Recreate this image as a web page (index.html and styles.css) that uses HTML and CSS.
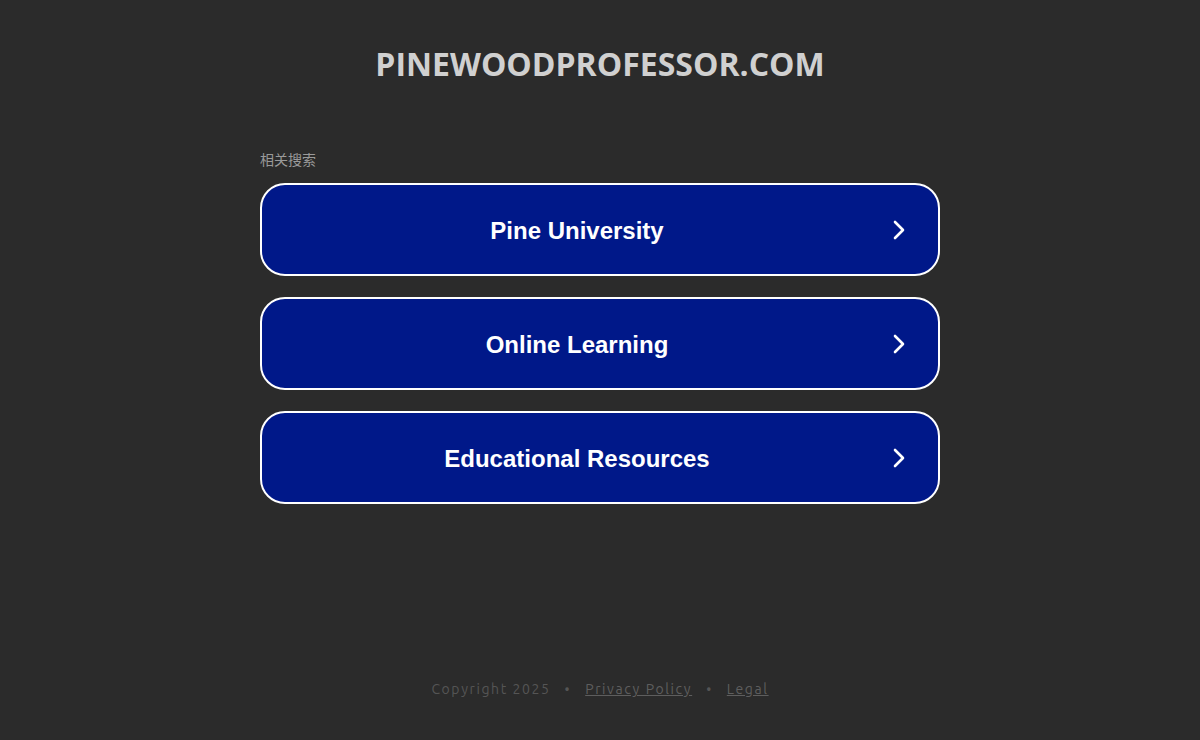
FILE: index.html
```html
<!DOCTYPE html>
<html>
<head>
<meta charset="utf-8">
<link rel="stylesheet" href="styles.css">
</head>
<body>
<div class="page">
  <header class="header">
    <h1 class="domain">PINEWOODPROFESSOR.COM</h1>
  </header>
  <main class="main">
    <div class="label">相关搜索</div>
    <div class="list">
      <a class="btn" href="#"><span class="btn-text">Pine University</span><svg class="chev" width="14" height="22" viewBox="0 0 14 22"><path d="M3 3 L11 11 L3 19" fill="none" stroke="#fff" stroke-width="2.6" stroke-linecap="round" stroke-linejoin="round"/></svg></a>
      <a class="btn" href="#"><span class="btn-text">Online Learning</span><svg class="chev" width="14" height="22" viewBox="0 0 14 22"><path d="M3 3 L11 11 L3 19" fill="none" stroke="#fff" stroke-width="2.6" stroke-linecap="round" stroke-linejoin="round"/></svg></a>
      <a class="btn" href="#"><span class="btn-text">Educational Resources</span><svg class="chev" width="14" height="22" viewBox="0 0 14 22"><path d="M3 3 L11 11 L3 19" fill="none" stroke="#fff" stroke-width="2.6" stroke-linecap="round" stroke-linejoin="round"/></svg></a>
    </div>
  </main>
  <footer class="footer">
    <span>Copyright 2025</span>
    <span class="dot">•</span>
    <a href="#" class="flink">Privacy Policy</a>
    <span class="dot">•</span>
    <a href="#" class="flink">Legal</a>
  </footer>
</div>
</body>
</html>
```
FILE: styles.css
```css
html, body {
  margin: 0;
  padding: 0;
  background: #2b2b2b;
}
.page {
  width: 1200px;
  height: 740px;
  display: flex;
  flex-direction: column;
  align-items: center;
}
.header {
  padding-top: 43px;
}
.domain {
  margin: 0;
  font-family: "Open Sans", sans-serif;
  font-weight: 700;
  font-size: 32px;
  line-height: 42px;
  color: #d0d0d0;
  letter-spacing: 0;
}
.main {
  width: 680px;
  margin-top: 65px;
}
.label {
  font-family: "Noto Sans CJK SC", sans-serif;
  font-size: 14px;
  line-height: 18px;
  color: #9a9a9a;
  margin-bottom: 15px;
}
.list {
  display: flex;
  flex-direction: column;
  gap: 21px;
}
.btn {
  box-sizing: border-box;
  height: 93px;
  border: 2px solid #ffffff;
  border-radius: 25px;
  background: #001889;
  display: flex;
  align-items: center;
  text-decoration: none;
  padding: 0 32px 0 0;
}
.btn-text {
  flex: 1;
  text-align: center;
  font-family: "Liberation Sans", Arial, sans-serif;
  font-weight: 700;
  font-size: 24px;
  color: #ffffff;
  padding-top: 2px;
}
.chev {
  flex: none;
}
.footer {
  margin-top: auto;
  margin-bottom: 43px;
  font-family: "Ubuntu", "DejaVu Sans", sans-serif;
  font-size: 14px;
  color: #555555;
  letter-spacing: 1.6px;
  display: flex;
  gap: 14px;
}
.flink {
  color: #5e5e5e;
  text-decoration: underline;
}
.dot {
  color: #555555;
}
```
